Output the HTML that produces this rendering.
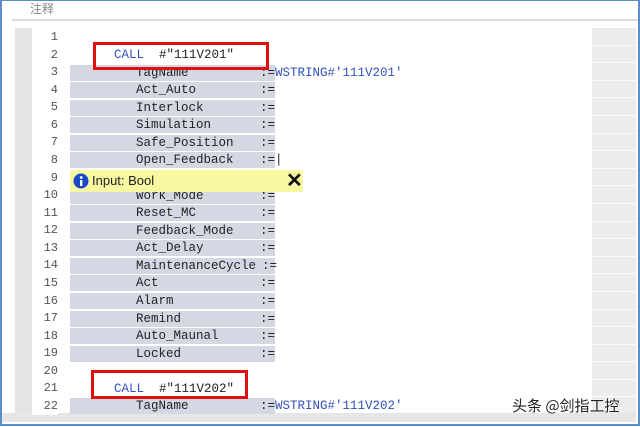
<html><head><style>
body{margin:0;width:640px;height:427px;overflow:hidden;background:#fff;position:relative;font-family:"Liberation Mono",monospace}
.frame{position:absolute;left:0;top:0;width:636px;height:423px;border:2px solid #5a8fc8;border-top:1px solid #5a8fc8;background:#fff}
.hdr{position:absolute;left:30px;top:0;font:12px "Liberation Sans","Noto Sans CJK SC",sans-serif;color:#888}
.sep{position:absolute;left:12px;top:19px;width:626px;height:2px;background:#ddd}
.gut{position:absolute;left:15px;top:28px;width:17px;height:385px;background:#e4e4e4}
.num{position:absolute;left:32px;width:26px;text-align:right;font-size:12px;color:#555;background:#fff}
.row{position:absolute;left:70px;width:205px;height:16px;background:#d3d8e2}
.t{position:absolute;font-size:12.5px;color:#222;line-height:16px}
.blue{color:#3050c0}
.red{position:absolute;border:3px solid #e01010}
.tip{position:absolute;left:70px;top:170px;width:233px;height:22px;background:#f8f7a2;font:13px "Liberation Sans",sans-serif}
.rp{position:absolute;left:592px;top:28px;width:44px;height:385px;background:#ececec}
.rp div{height:16.6px;border-bottom:1px solid #fafafa}
.bot{position:absolute;left:2px;top:413px;width:634px;height:9px;background:#e6e6e6}
</style></head><body>
<div class="frame"></div>
<div class="hdr">注释</div>
<div class="sep"></div>
<div class="gut"></div>
<div class="rp"><div></div><div></div><div></div><div></div><div></div><div></div><div></div><div></div><div></div><div></div><div></div><div></div><div></div><div></div><div></div><div></div><div></div><div></div><div></div><div></div><div></div><div></div></div>
<div class="bot"></div>
<div id="c"></div>
<div class="red" style="left:93px;top:42px;width:170px;height:22px"></div>
<div class="red" style="left:91px;top:370px;width:151px;height:23px"></div>
<div class="tip"><svg style="position:absolute;left:3px;top:3px" width="16" height="16"><circle cx="8" cy="8" r="7.5" fill="#1848c8"/><rect x="7" y="7" width="2.4" height="6" fill="#fff"/><circle cx="8.2" cy="4.5" r="1.4" fill="#fff"/></svg><span style="position:absolute;left:22px;top:3px;color:#222">Input: Bool</span><span style="position:absolute;left:216px;top:-2px;font-size:20px;font-weight:bold;color:#111;font-family:'Liberation Sans',sans-serif">✕</span></div>
<div style="position:absolute;left:512px;top:395px;font:15px 'Noto Sans CJK SC',sans-serif;color:#222;text-shadow:0 0 2px #fff">头条 @剑指工控</div>
<script>
var names=["","","","TagName","Act_Auto","Interlock","Simulation","Safe_Position","Open_Feedback","","Work_Mode","Reset_MC","Feedback_Mode","Act_Delay","MaintenanceCycle","Act","Alarm","Remind","Auto_Maunal","Locked","","","TagName"];
var h="";
for(var n=1;n<=22;n++){var y=29+(n-1)*17.57;
h+='<div class="num" style="top:'+y+'px;height:17px;line-height:17px">'+n+'</div>';
if((n>=3&&n<=19)||n==22){h+='<div class="row" style="top:'+(y+0.5)+'px"></div>';
h+='<div class="t" style="left:136px;top:'+(y+0.5)+'px">'+names[n]+'</div>';
var ax=(n==14)?262:260;
h+='<div class="t" style="left:'+ax+'px;top:'+(y+0.5)+'px">:='+((n==3)?'<span class="blue">WSTRING#\'111V201\'</span>':(n==22)?'<span class="blue">WSTRING#\'111V202\'</span>':(n==8)?'|':'')+'</div>';}
if(n==2||n==21){h+='<div class="t" style="left:114px;top:'+(y+0.5)+'px"><span class="blue">CALL</span>&nbsp; #"111V20'+(n==2?1:2)+'"</div>';}
}
document.getElementById("c").innerHTML=h;
</script>
</body></html>
